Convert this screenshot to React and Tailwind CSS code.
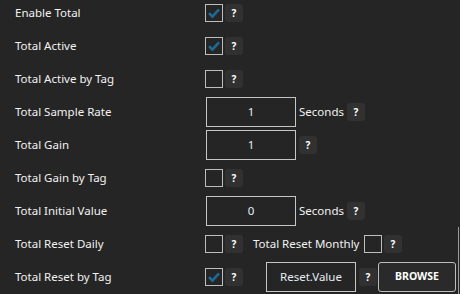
import React from 'react'

const font = { fontFamily: '"Noto Sans", "Open Sans", sans-serif' }

const Check = ({ checked }) => (
  <div className="w-[18px] h-[18px] border border-[#bdbdbd] flex items-center justify-center shrink-0">
    {checked && (
      <svg width="14" height="14" viewBox="0 0 14 14">
        <path d="M2 7.2 L5.4 10.6 L12 3.4" fill="none" stroke="#1d6a99" strokeWidth="2.6" />
      </svg>
    )}
  </div>
)

const Help = () => (
  <div className="w-[18px] h-[18px] rounded-[3px] bg-[#313131] flex items-center justify-center text-[10px] font-bold text-white shrink-0">
    ?
  </div>
)

const Field = ({ value, className = 'ml-[1px]' }) => (
  <div className={`w-[90px] h-[30px] border border-[#c6c6c6] flex items-center justify-center text-[11.5px] text-[#e4edf4] shrink-0 ${className}`}>
    {value}
  </div>
)

const Row = ({ label, children }) => (
  <div className="h-[30px] flex items-center">
    <div className="w-[205px] shrink-0 pl-[15px] text-[11.5px] text-[#f2f2f2]">{label}</div>
    <div className="flex items-center">{children}</div>
  </div>
)

export default function App() {
  return (
    <div className="relative w-[460px] h-[294px] bg-[#252525] overflow-hidden" style={font}>
      <div className="flex flex-col gap-[3px] -mt-[2px]">
        <Row label="Enable Total">
          <Check checked />
          <div className="ml-[2px]"><Help /></div>
        </Row>
        <Row label="Total Active">
          <Check checked />
          <div className="ml-[2px]"><Help /></div>
        </Row>
        <Row label="Total Active by Tag">
          <Check />
          <div className="ml-[2px]"><Help /></div>
        </Row>
        <Row label="Total Sample Rate">
          <Field value="1" />
          <span className="ml-[3px] text-[11.5px] text-[#f2f2f2]">Seconds</span>
          <div className="ml-[3px]"><Help /></div>
        </Row>
        <Row label="Total Gain">
          <Field value="1" />
          <div className="ml-[3px]"><Help /></div>
        </Row>
        <Row label="Total Gain by Tag">
          <Check />
          <div className="ml-[2px]"><Help /></div>
        </Row>
        <Row label="Total Initial Value">
          <Field value="0" />
          <span className="ml-[3px] text-[11.5px] text-[#f2f2f2]">Seconds</span>
          <div className="ml-[3px]"><Help /></div>
        </Row>
        <Row label="Total Reset Daily">
          <Check />
          <div className="ml-[2px]"><Help /></div>
          <span className="ml-[10px] w-[111px] shrink-0 whitespace-nowrap text-[11.5px] text-[#f2f2f2]">Total Reset Monthly</span>
          <Check />
          <div className="ml-[2px]"><Help /></div>
        </Row>
        <Row label="Total Reset by Tag">
          <Check checked />
          <div className="ml-[2px]"><Help /></div>
          <Field value="Reset.Value" className="ml-[23px]" />
          <div className="ml-[3px]"><Help /></div>
          <button className="ml-[1px] w-[78px] h-[30px] shrink-0 rounded-[3px] border border-[#bdbdbd] bg-[#2a2a2a] text-[10.5px] font-bold text-white">
            BROWSE
          </button>
        </Row>
      </div>
      <div className="absolute right-[1px] top-[227px] bottom-0 w-[1px] bg-[#9a9a9a]" />
    </div>
  )
}
